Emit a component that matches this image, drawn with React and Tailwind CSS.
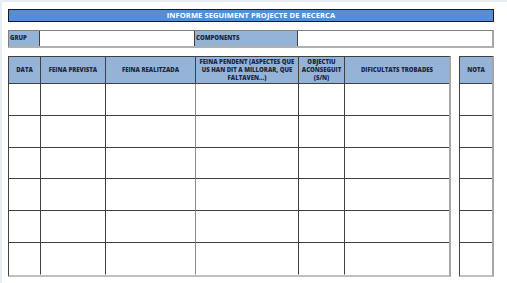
const cols = [
  { w: "w-[32px]", label: "DATA" },
  { w: "w-[65px]", label: "FEINA PREVISTA" },
  { w: "w-[90px]", label: "FEINA REALITZADA" },
  { w: "w-[103px]", label: "FEINA PENDENT (ASPECTES QUE US HAN DIT A MILLORAR, QUE FALTAVEN...)" },
  { w: "w-[46px]", label: "OBJECTIU ACONSEGUIT (S/N)" },
  { w: "w-[104px]", label: "DIFICULTATS TROBADES" },
];

const rowHeights = ["h-[32px]", "h-[32px]", "h-[31px]", "h-[32px]", "h-[32px]", "h-[32px]"];

function HeaderCell({ w, label, last }) {
  return (
    <div className={`${w} h-[27px] shrink-0 bg-[#95b3d7] border-b border-[#404040] ${last ? "" : "border-r"} flex items-center justify-center text-center px-[3px]`}>
      <span className="text-[6px] leading-[8px] font-extrabold text-[#1d2840]">{label}</span>
    </div>
  );
}

export default function App() {
  return (
    <div
      className="w-[507px] h-[283px] bg-white border-t-2 border-l-2 border-[#e8ecf3] overflow-hidden pl-[6px] pt-[7px]"
      style={{ fontFamily: '"Open Sans", "Liberation Sans", sans-serif' }}
    >
      {/* Title */}
      <div className="w-[486px] h-[13px] bg-[#558ed5] border border-[#1a1a1a] flex items-center justify-center">
        <span className="text-[7.5px] font-bold text-white tracking-[0.1px]">INFORME SEGUIMENT PROJECTE DE RECERCA</span>
      </div>

      {/* Grup / components */}
      <div className="mt-[8px] w-[486px] h-[18px] flex border-t border-l border-[#808080] border-r-2 border-b-2 border-r-[#a6a6a6] border-b-[#b0b0b0]">
        <div className="w-[31px] bg-[#95b3d7] border-r border-[#404040] flex items-center pl-[1px]">
          <span className="text-[6px] font-extrabold text-[#1d2840]">GRUP</span>
        </div>
        <div className="w-[155px] bg-white border-r border-[#404040]" />
        <div className="w-[103px] bg-[#95b3d7] border-r border-[#404040] flex items-center pl-[1px]">
          <span className="text-[6px] font-extrabold text-[#1d2840]">COMPONENTS</span>
        </div>
        <div className="flex-1 bg-white" />
      </div>

      {/* Main table + nota */}
      <div className="mt-[8px] flex items-start">
        <div className="flex flex-col border-t border-l border-[#404040] border-r-2 border-r-[#a6a6a6] border-b-2 border-b-[#c0c0c0]">
          <div className="flex">
            {cols.map((c, i) => (
              <HeaderCell key={i} w={c.w} label={c.label} last={i === 5} />
            ))}
          </div>
          {rowHeights.map((h, r) => (
            <div key={r} className="flex">
              {cols.map((c, i) => (
                <div
                  key={i}
                  className={`${c.w} ${h} shrink-0 bg-white border-b ${r === 5 ? "border-b-transparent" : "border-b-[#404040]"} ${i === 5 ? "border-r-0" : "border-r"} ${i === 2 ? "border-r-[#8c8c8c]" : "border-r-[#404040]"}`}
                />
              ))}
            </div>
          ))}
        </div>

        <div className="ml-[8px] flex flex-col border-t border-l border-[#404040] border-r-2 border-r-[#a6a6a6] border-b-2 border-b-[#c0c0c0]">
          <div className="w-[32px] h-[27px] bg-[#95b3d7] border-b border-[#404040] flex items-center justify-center">
            <span className="text-[6px] font-extrabold text-[#1d2840]">NOTA</span>
          </div>
          {rowHeights.map((h, r) => (
            <div key={r} className={`w-[32px] ${h} bg-white border-b ${r === 5 ? "border-b-transparent" : "border-b-[#404040]"}`} />
          ))}
        </div>
      </div>
    </div>
  );
}
